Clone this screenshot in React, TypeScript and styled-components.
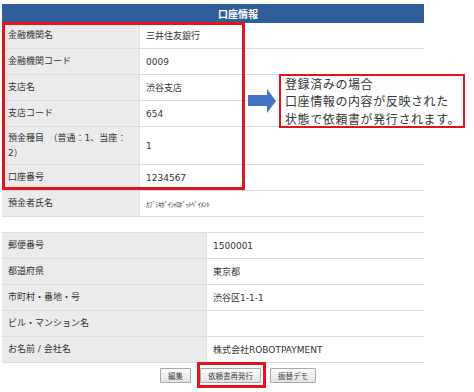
import React from "react";
import styled, { createGlobalStyle } from "styled-components";

const GlobalStyle = createGlobalStyle`
    body {
        margin: 0;
        background: #fff;
        font-family: "DejaVu Sans", "Noto Sans CJK JP", sans-serif;
        color: #333;
    }
`;

type Field = { label: string; value: string; tall?: boolean };

const accountRows: Field[] = [
    { label: "金融機関名", value: "三井住友銀行" },
    { label: "金融機関コード", value: "0009" },
    { label: "支店名", value: "渋谷支店" },
    { label: "支店コード", value: "654" },
    { label: "預金種目　（普通：1、当座：2）", value: "1", tall: true },
    { label: "口座番号", value: "1234567" },
    { label: "預金者氏名", value: "ｶﾌﾞｼｷｶﾞｲｼｬﾛﾎﾞｯﾄﾍﾟｲﾒﾝﾄ" },
];

const addressRows: Field[] = [
    { label: "郵便番号", value: "1500001" },
    { label: "都道府県", value: "東京都" },
    { label: "市町村・番地・号", value: "渋谷区1-1-1" },
    { label: "ビル・マンション名", value: "" },
    { label: "お名前 / 会社名", value: "株式会社ROBOTPAYMENT" },
];

const App: React.FC = () => {
    return (
        <>
            <GlobalStyle />
            <Page>
                <Panel>
                    <Header>口座情報</Header>
                    <Table>
                        {accountRows.map((r) => (
                            <Row key={r.label} $labelWidth={138}>
                                <Label $tall={r.tall}>{r.label}</Label>
                                <Value $small={r.label === "預金者氏名"}>{r.value}</Value>
                            </Row>
                        ))}
                    </Table>
                    <Table $bordered>
                        {addressRows.map((r) => (
                            <Row key={r.label} $labelWidth={205}>
                                <Label>{r.label}</Label>
                                <Value>{r.value}</Value>
                            </Row>
                        ))}
                    </Table>
                </Panel>
                <ButtonBar>
                    <Button>編集</Button>
                    <Highlight>
                        <Button>依頼書再発行</Button>
                        <HighlightFrame />
                    </Highlight>
                    <Button>振替デモ</Button>
                </ButtonBar>

                <TableFrame />
                <Arrow width="28" height="24" viewBox="0 0 28 24">
                    <path d="M0 6 H19 V0 L28 12 L19 24 V17 H0 Z" fill="#4472c4" />
                </Arrow>
                <Callout>
                    <CalloutLine>登録済みの場合</CalloutLine>
                    <CalloutLine>口座情報の内容が反映された</CalloutLine>
                    <CalloutLine>状態で依頼書が発行されます。</CalloutLine>
                </Callout>
            </Page>
        </>
    );
};

const Page = styled.div`
    position: relative;
    width: 474px;
    height: 392px;
    box-sizing: border-box;
    padding: 4px 0 0 2px;
    overflow: hidden;
`;

const Panel = styled.div`
    width: 422px;
`;

const Header = styled.div`
    height: 19px;
    background: #2f5e9b;
    color: #fff;
    font-family: "Noto Sans CJK JP", sans-serif;
    font-weight: 700;
    font-size: 10px;
    line-height: 19px;
    text-align: center;
    padding-left: 50px;
    box-sizing: border-box;
`;

const Table = styled.div<{ $bordered?: boolean }>`
    display: flex;
    flex-direction: column;
    border-top: ${(p) => (p.$bordered ? "1px solid #dcdcdc" : "none")};
    margin-top: ${(p) => (p.$bordered ? "15px" : "0")};
`;

const Row = styled.div<{ $labelWidth: number }>`
    display: grid;
    grid-template-columns: ${(p) => p.$labelWidth}px 1fr;
    border-bottom: 1px solid #dcdcdc;
    font-size: 9px;
`;

const Label = styled.div<{ $tall?: boolean }>`
    background: #ebebeb;
    height: ${(p) => (p.$tall ? "37px" : "25px")};
    padding: 0 10px 0 6px;
    display: flex;
    align-items: center;
    line-height: 15px;
    border-right: 1px solid #e2e2e2;
`;

const Value = styled.div<{ $small?: boolean }>`
    background: #fff;
    padding: 0 6px;
    display: flex;
    align-items: center;
    font-size: ${(p) => (p.$small ? "7px" : "9px")};
    letter-spacing: ${(p) => (p.$small ? "-0.6px" : "0")};
`;

const ButtonBar = styled.div`
    width: 472px;
    display: flex;
    justify-content: center;
    gap: 9px;
    margin-top: 5px;
`;

const Button = styled.button`
    height: 15px;
    padding: 0 7px;
    border: 1px solid #a8a8a8;
    border-radius: 1px;
    background: linear-gradient(#fbfbfb, #e3e3e3);
    font-family: "Noto Sans CJK JP", sans-serif;
    font-size: 7.5px;
    line-height: 13px;
    color: #444;
`;

const Highlight = styled.span`
    position: relative;
    display: inline-flex;
`;

const HighlightFrame = styled.span`
    position: absolute;
    left: -3px;
    right: -5px;
    top: -6px;
    bottom: -5px;
    border: 3px solid #e3141b;
    pointer-events: none;
`;

const TableFrame = styled.div`
    position: absolute;
    left: 2px;
    top: 22px;
    width: 243px;
    height: 168px;
    box-sizing: border-box;
    border: 3px solid #e3141b;
`;

const Arrow = styled.svg`
    position: absolute;
    left: 248px;
    top: 89px;
`;

const Callout = styled.div`
    position: absolute;
    left: 279px;
    top: 74px;
    width: 186px;
    height: 54px;
    box-sizing: border-box;
    border: 2px solid #e3141b;
    background: #fff;
    padding: 0 0 0 4px;
    display: flex;
    flex-direction: column;
    justify-content: center;
    font-family: "Noto Sans CJK JP", sans-serif;
    color: #333;
`;

const CalloutLine = styled.div`
    font-size: 12px;
    line-height: 17.5px;
    letter-spacing: 0.6px;
    white-space: nowrap;
`;

export default App;
